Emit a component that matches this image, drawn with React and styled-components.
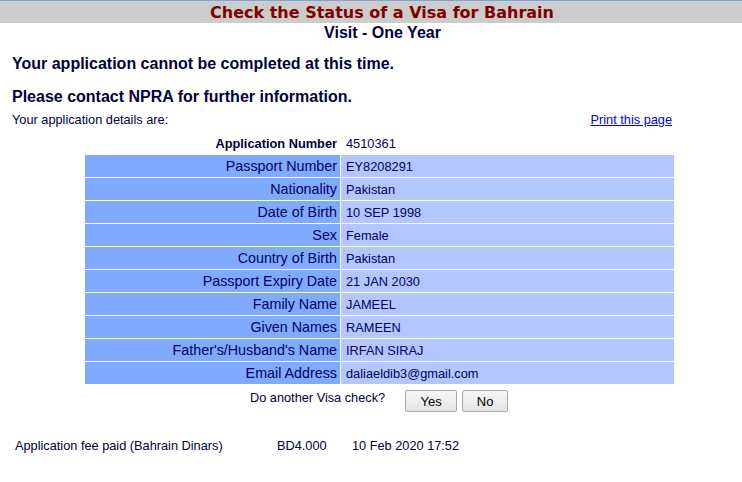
import React from 'react';
import styled, { createGlobalStyle } from 'styled-components';

const rows = [
  ['Passport Number', 'EY8208291'],
  ['Nationality', 'Pakistan'],
  ['Date of Birth', '10 SEP 1998'],
  ['Sex', 'Female'],
  ['Country of Birth', 'Pakistan'],
  ['Passport Expiry Date', '21 JAN 2030'],
  ['Family Name', 'JAMEEL'],
  ['Given Names', 'RAMEEN'],
  ["Father's/Husband's Name", 'IRFAN SIRAJ'],
  ['Email Address', 'daliaeldib3@gmail.com'],
];

function App() {
  return (
    <>
      <GlobalStyle />
      <StTitleBar>
        <h1>Check the Status of a Visa for Bahrain</h1>
      </StTitleBar>
      <StSubTitle>Visit - One Year</StSubTitle>
      <StHeading>Your application cannot be completed at this time.</StHeading>
      <StHeading>Please contact NPRA for further information.</StHeading>
      <StIntroRow>
        <span>Your application details are:</span>
        <a href="#print">Print this page</a>
      </StIntroRow>
      <StDetails>
        <tbody>
          <tr>
            <StLabel $plain>Application Number</StLabel>
            <StValue $plain>4510361</StValue>
          </tr>
          {rows.map(([label, value]) => (
            <tr key={label}>
              <StLabel>{label}</StLabel>
              <StValue>{value}</StValue>
            </tr>
          ))}
        </tbody>
      </StDetails>
      <StAgainRow>
        <span>Do another Visa check?</span>
        <StButton $w={52}>Yes</StButton>
        <StButton $w={46}>No</StButton>
      </StAgainRow>
      <StFeeRow>
        <span>Application fee paid (Bahrain Dinars)</span>
        <span>BD4.000</span>
        <span>10 Feb 2020 17:52</span>
      </StFeeRow>
    </>
  );
}

export default App;

const GlobalStyle = createGlobalStyle`
  body {
    margin: 0;
    background: #fff;
    font-family: "Liberation Sans", Arial, sans-serif;
    color: #000040;
  }
`;

const StTitleBar = styled.div`
  border-top: 1px solid #7ea5d9;
  background: #cccccc;
  height: 22px;
  display: flex;
  justify-content: center;
  align-items: center;

  h1 {
    margin: 0 0 0 22px;
    font-family: "DejaVu Sans", Verdana, sans-serif;
    font-size: 16px;
    font-weight: bold;
    color: #800000;
  }
`;

const StSubTitle = styled.div`
  text-align: center;
  font-size: 16px;
  font-weight: bold;
  line-height: 18px;
  margin: 1px 0 0 23px;
  color: #000040;
`;

const StHeading = styled.h2`
  margin: 13px 0 0 12px;
  font-size: 16px;
  line-height: 18px;
  font-weight: bold;
  color: #000040;
  & + & {
    margin-top: 15px;
  }
`;

const StIntroRow = styled.div`
  display: flex;
  justify-content: space-between;
  align-items: center;
  margin: 7px 70px 0 12px;
  font-size: 12.75px;
  line-height: 14px;

  a {
    color: #0000ee;
    text-decoration: underline;
  }
`;

const StDetails = styled.table`
  margin: 4px 0 0 84px;
  width: 591px;
  border-spacing: 1px;
  color: #000066;
`;

const StLabel = styled.td`
  width: 252px;
  height: 22px;
  padding: 0 3px 0 0;
  text-align: right;
  background: ${(p) => (p.$plain ? 'transparent' : '#80aaff')};
  font-size: ${(p) => (p.$plain ? '12.8px' : '14.3px')};
  font-weight: ${(p) => (p.$plain ? 'bold' : 'normal')};
  color: ${(p) => (p.$plain ? '#000040' : '#000066')};
`;

const StValue = styled.td`
  height: 22px;
  padding: 0 0 0 5px;
  font-size: 12.8px;
  background: ${(p) => (p.$plain ? 'transparent' : '#b3c6ff')};
`;

const StAgainRow = styled.div`
  display: flex;
  align-items: center;
  margin: 5px 0 0 250px;
  font-size: 12.75px;
  color: #000040;

  span {
    margin-right: 20px;
    align-self: flex-start;
  }
`;

const StButton = styled.button`
  width: ${(p) => p.$w}px;
  height: 22px;
  margin-right: 5px;
  padding: 0;
  background: linear-gradient(#f6f6f6, #e4e4e4);
  border: 1px solid #a9a9a9;
  border-radius: 2px;
  font-family: "Liberation Sans", Arial, sans-serif;
  font-size: 13px;
  color: #000;
`;

const StFeeRow = styled.div`
  display: flex;
  margin: 26px 0 0 15px;
  font-size: 12.75px;
  color: #000040;

  span:nth-child(1) {
    width: 262px;
  }
  span:nth-child(2) {
    width: 75px;
  }
`;
